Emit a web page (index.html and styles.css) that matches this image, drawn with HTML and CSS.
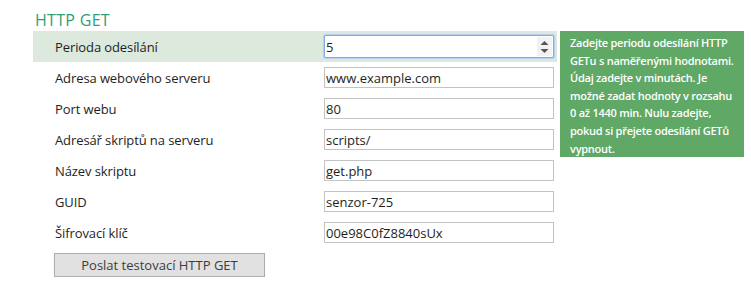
FILE: index.html
```html
<!DOCTYPE html>
<html lang="cs">
<head>
  <meta charset="UTF-8" />
  <meta name="viewport" content="width=device-width, initial-scale=1.0" />
  <title>HTTP GET</title>
  <link rel="stylesheet" href="styles.css">
</head>
<body>
  <div class="section">
    <h3 class="heading">HTTP GET</h3>
    <div class="form">
      <div class="row active">
        <label class="label" for="period">Perioda odesílání</label>
        <div class="number-box">
          <input type="text" id="period" class="number-input" value="5" autofocus>
          <span class="spinner">
            <svg width="9" height="14" viewBox="0 0 9 14"><path d="M4.5 1 L8.5 5 L0.5 5 Z M4.5 13 L8.5 9 L0.5 9 Z" fill="#555"/></svg>
          </span>
        </div>
        <div class="tooltip">Zadejte periodu odesílání HTTP GETu s naměřenými hodnotami. Údaj zadejte v minutách. Je možné zadat hodnoty v rozsahu 0 až 1440 min. Nulu zadejte, pokud si přejete odesílání GETů vypnout.</div>
      </div>
      <div class="row">
        <label class="label" for="server">Adresa webového serveru</label>
        <input type="text" id="server" class="field" value="www.example.com">
      </div>
      <div class="row">
        <label class="label" for="port">Port webu</label>
        <input type="text" id="port" class="field" value="80">
      </div>
      <div class="row">
        <label class="label" for="dir">Adresář skriptů na serveru</label>
        <input type="text" id="dir" class="field" value="scripts/">
      </div>
      <div class="row">
        <label class="label" for="script">Název skriptu</label>
        <input type="text" id="script" class="field" value="get.php">
      </div>
      <div class="row">
        <label class="label" for="guid">GUID</label>
        <input type="text" id="guid" class="field" value="senzor-725">
      </div>
      <div class="row">
        <label class="label" for="key">Šifrovací klíč</label>
        <input type="text" id="key" class="field" value="00e98C0fZ8840sUx">
      </div>
    </div>
    <button class="button-test">Poslat testovací HTTP GET</button>
  </div>
</body>
</html>
```

FILE: styles.css
```css
body {
  font-family: 'Segoe UI', 'Open Sans', sans-serif;
  margin: 0;
  background-color: #ffffff;
  color: #1e1e1e;
}

.section {
  padding: 10px 0 0 33px;
}

.heading {
  margin: 0 0 0 2px;
  height: 21px;
  font-size: 16px;
  font-weight: 400;
  line-height: 21px;
  color: #2f9f78;
  letter-spacing: 0.3px;
}

.form {
  display: flex;
  flex-direction: column;
  width: 524px;
}

.row {
  position: relative;
  display: flex;
  align-items: center;
  height: 31px;
}

.row.active {
  background-color: #dce9dc;
}

.label {
  width: 269px;
  padding-left: 22px;
  font-size: 13px;
  letter-spacing: -0.1px;
}

.field, .number-box {
  box-sizing: border-box;
  width: 230px;
  height: 21px;
  border: 1px solid #c3c3c3;
  padding: 0 1px;
  font-family: 'Segoe UI', 'Open Sans', sans-serif;
  font-size: 13px;
  color: #1e1e1e;
  outline: none;
}

.number-box {
  display: flex;
  align-items: center;
  height: 23px;
  border: 1px solid #84a8e2;
  box-shadow: 0 0 1px 1px #b8cdf0;
  border-radius: 2px;
  background-color: #ffffff;
}

.number-input {
  flex: 1;
  border: none;
  outline: none;
  padding: 0;
  font-family: 'Segoe UI', 'Open Sans', sans-serif;
  font-size: 13px;
  color: #1e1e1e;
  background: transparent;
  caret-color: #000000;
}

.spinner {
  display: flex;
  align-items: center;
  justify-content: center;
  width: 15px;
  height: 19px;
  background-color: #f2f2f2;
}

.tooltip {
  position: absolute;
  left: 527px;
  top: 0;
  width: 170px;
  padding: 3px 4px 0 10px;
  background-color: #5fa866;
  color: #ffffff;
  font-size: 11px;
  font-weight: 600;
  letter-spacing: -0.25px;
  line-height: 17.6px;
}

.button-test {
  margin: 5px 0 0 21px;
  width: 211px;
  height: 24px;
  background-color: #e1e1e1;
  border: 1px solid #adadad;
  box-shadow: 0 1px 1px rgba(0, 0, 0, 0.15);
  font-family: 'Segoe UI', 'Open Sans', sans-serif;
  font-size: 13px;
  color: #3c3c3c;
  padding: 0;
}
```
